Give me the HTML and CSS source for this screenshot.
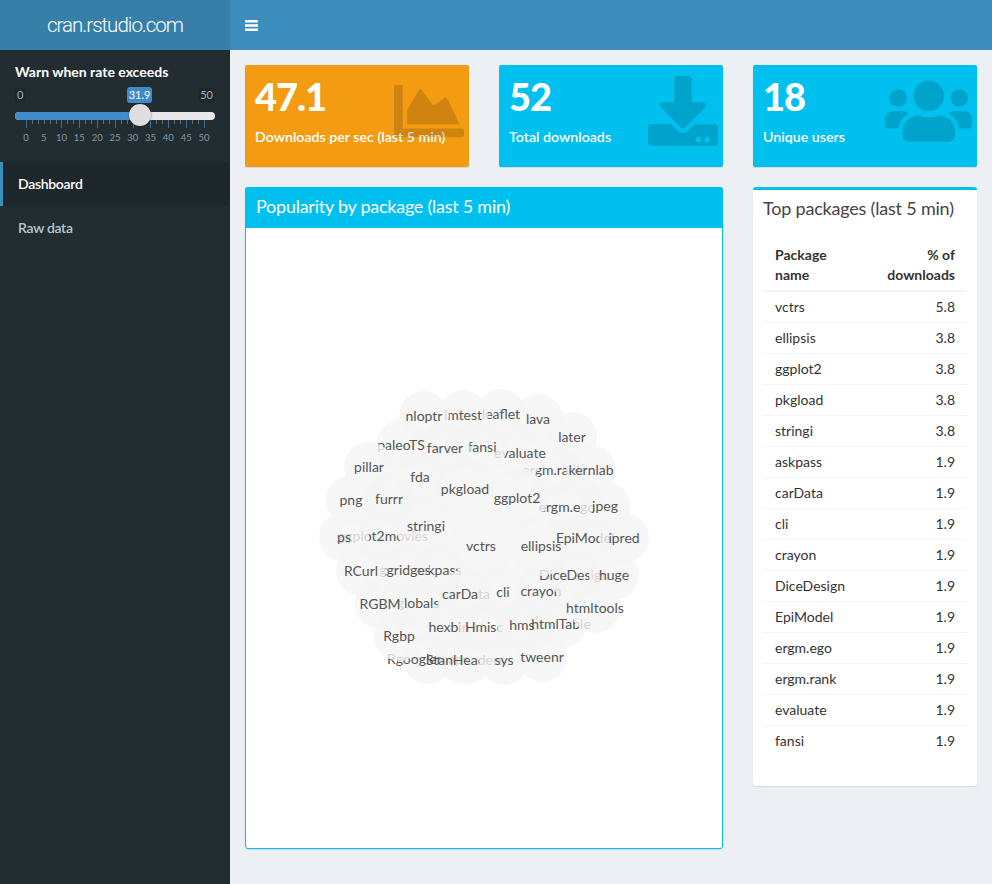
FILE: index.html
```html
<!DOCTYPE html>
<html lang="en">
<head>
  <meta charset="UTF-8">
  <title>cran.rstudio.com</title>
  <link rel="stylesheet" href="styles.css">
</head>
<body>
  <div class="wrapper">
    <div class="logo">cran.rstudio.com</div>
    <header class="navbar">
      <svg class="toggle" viewBox="0 0 13 11" preserveAspectRatio="none"><path d="M0 0h13v2.4H0zM0 4.3h13v2.4H0zM0 8.6h13V11H0z"/></svg>
    </header>

    <aside class="sidebar">
      <div class="slider-group">
        <label class="slider-label">Warn when rate exceeds</label>
        <div class="slider">
          <div class="slider-top">
            <span class="edge">0</span>
            <span class="edge">50</span>
          </div>
          <span class="current">31.9</span>
          <div class="track"><div class="track-fill"></div></div>
          <svg class="ticks" viewBox="15 120 200 8">
            <path class="tick-minor" d="M32.5 120v4M38.5 120v4M44.5 120v4M50.5 120v4M56.5 120v4M67.5 120v4M73.5 120v4M85.5 120v4M91.5 120v4M103.5 120v4M109.5 120v4M121.5 120v4M127.5 120v4M139.5 120v4M145.5 120v4M156.5 120v4M162.5 120v4M174.5 120v4M180.5 120v4M192.5 120v4M198.5 120v4"/>
            <path class="tick-major" d="M26.5 120v8M61.5 120v8M79.5 120v8M97.5 120v8M115.5 120v8M133.5 120v8M150.5 120v8M168.5 120v8M186.5 120v8M204.5 120v8"/>
          </svg>
          <span class="handle"></span>
          <div class="tick-labels">
            <span>0</span><span>5</span><span>10</span><span>15</span><span>20</span><span>25</span><span>30</span><span>35</span><span>40</span><span>45</span><span>50</span>
          </div>
        </div>
      </div>
      <ul class="menu">
        <li class="active">Dashboard</li>
        <li>Raw data</li>
      </ul>
    </aside>

    <main class="content">
      <div class="value-boxes">
        <div class="value-box orange">
          <h3>47.1</h3>
          <p>Downloads per sec (last 5 min)</p>
          <svg class="box-icon" viewBox="0 0 512 512"><path d="M500 384c6.6 0 12 5.4 12 12v40c0 6.6-5.4 12-12 12H12c-6.6 0-12-5.4-12-12V76c0-6.6 5.4-12 12-12h40c6.6 0 12 5.4 12 12v308h436zM372.7 159.5L288 216l-85.3-113.7c-5.1-6.8-15.5-6.3-19.9 1L96 248v104h384l-89.9-187.8c-3.2-6.5-11.4-8.7-17.4-4.7z"/></svg>
        </div>
        <div class="value-box blue">
          <h3>52</h3>
          <p>Total downloads</p>
          <svg class="box-icon" viewBox="0 0 512 512"><path d="M216 0h80c13.3 0 24 10.7 24 24v168h87.7c17.8 0 26.7 21.5 14.1 34.1L269.7 378.3c-7.5 7.5-19.8 7.5-27.3 0L90.1 226.1c-12.6-12.6-3.7-34.1 14.1-34.1H192V24c0-13.3 10.7-24 24-24zm296 376v112c0 13.3-10.7 24-24 24H24c-13.3 0-24-10.7-24-24V376c0-13.3 10.7-24 24-24h146.7l49 49c20.1 20.1 52.5 20.1 72.6 0l49-49H488c13.3 0 24 10.7 24 24zm-124 88c0-11-9-20-20-20s-20 9-20 20 9 20 20 20 20-9 20-20zm64 0c0-11-9-20-20-20s-20 9-20 20 9 20 20 20 20-9 20-20z"/></svg>
        </div>
        <div class="value-box blue">
          <h3>18</h3>
          <p>Unique users</p>
          <svg class="box-icon wide" viewBox="0 0 640 512"><path d="M96 224c35.3 0 64-28.7 64-64s-28.7-64-64-64-64 28.7-64 64 28.7 64 64 64zm448 0c35.3 0 64-28.7 64-64s-28.7-64-64-64-64 28.7-64 64 28.7 64 64 64zm32 32h-64c-17.6 0-33.5 7.1-45.1 18.6 40.3 22.1 68.9 62 75.1 109.4h66c17.7 0 32-14.3 32-32v-32c0-35.3-28.7-64-64-64zm-256 0c61.9 0 112-50.1 112-112S381.9 32 320 32 208 82.1 208 144s50.1 112 112 112zm76.8 32h-8.3c-20.8 10-43.9 16-68.5 16s-47.6-6-68.5-16h-8.3C179.6 288 128 339.6 128 403.2V432c0 26.5 21.5 48 48 48h288c26.5 0 48-21.5 48-48v-28.8c0-63.6-51.6-115.2-115.2-115.2zm-223.7-13.4C161.5 263.1 145.6 256 128 256H64c-35.3 0-64 28.7-64 64v32c0 17.7 14.3 32 32 32h65.9c6.3-47.4 34.9-87.3 75.2-109.4z"/></svg>
        </div>
      </div>

      <div class="boxes">
        <section class="box-solid">
          <h2 class="box-solid-title">Popularity by package (last 5 min)</h2>
          <!-- viewBox uses page coordinates, bubbles are drawn alphabetically so later ones cover earlier labels -->
          <svg class="bubbles" viewBox="246 228 476 620">
            <circle cx="484" cy="538" r="125"/>
            <circle cx="438" cy="570" r="25"/><text x="438" y="575">askpass</text>
            <circle cx="466" cy="594" r="25"/><text x="466" y="599">carData</text>
            <circle cx="503" cy="592" r="25"/><text x="503" y="597">cli</text>
            <circle cx="541" cy="591" r="25"/><text x="541" y="596">crayon</text>
            <circle cx="574" cy="575" r="25"/><text x="574" y="580">DiceDesign</text>
            <circle cx="541" cy="546" r="30"/><text x="541" y="551">ellipsis</text>
            <circle cx="585" cy="538" r="25"/><text x="585" y="543">EpiModel</text>
            <circle cx="567" cy="507" r="25"/><text x="567" y="512">ergm.ego</text>
            <circle cx="553" cy="470" r="25"/><text x="553" y="475">ergm.rank</text>
            <circle cx="520" cy="453" r="25"/><text x="520" y="458">evaluate</text>
            <circle cx="482" cy="447" r="25"/><text x="482" y="452">fansi</text>
            <circle cx="445" cy="448" r="25"/><text x="445" y="453">farver</text>
            <circle cx="420" cy="477" r="25"/><text x="420" y="482">fda</text>
            <circle cx="389" cy="499" r="25"/><text x="389" y="504">furrr</text>
            <circle cx="517" cy="498" r="30"/><text x="517" y="503">ggplot2</text>
            <circle cx="383" cy="536" r="25"/><text x="383" y="541">ggplot2movies</text>
            <circle cx="405" cy="570" r="25"/><text x="405" y="575">ggridges</text>
            <circle cx="418" cy="603" r="25"/><text x="418" y="608">globals</text>
            <circle cx="449" cy="627" r="25"/><text x="449" y="632">hexbin</text>
            <circle cx="484" cy="627" r="25"/><text x="484" y="632">Hmisc</text>
            <circle cx="522" cy="625" r="25"/><text x="522" y="630">hms</text>
            <circle cx="561" cy="624" r="25"/><text x="561" y="629">htmlTable</text>
            <circle cx="595" cy="608" r="25"/><text x="595" y="613">htmltools</text>
            <circle cx="614" cy="575" r="25"/><text x="614" y="580">huge</text>
            <circle cx="624" cy="538" r="25"/><text x="624" y="543">ipred</text>
            <circle cx="605" cy="506" r="25"/><text x="605" y="511">jpeg</text>
            <circle cx="591" cy="470" r="25"/><text x="591" y="475">kernlab</text>
            <circle cx="572" cy="437" r="25"/><text x="572" y="442">later</text>
            <circle cx="538" cy="419" r="25"/><text x="538" y="424">lava</text>
            <circle cx="501" cy="414" r="25"/><text x="501" y="419">leaflet</text>
            <circle cx="463" cy="415" r="25"/><text x="463" y="420">lmtest</text>
            <circle cx="424" cy="416" r="25"/><text x="424" y="421">nloptr</text>
            <circle cx="401" cy="445" r="25"/><text x="401" y="450">paleoTS</text>
            <circle cx="369" cy="467" r="25"/><text x="369" y="472">pillar</text>
            <circle cx="465" cy="489" r="30"/><text x="465" y="494">pkgload</text>
            <circle cx="351" cy="500" r="25"/><text x="351" y="505">png</text>
            <circle cx="344" cy="537" r="25"/><text x="344" y="542">ps</text>
            <circle cx="361" cy="571" r="25"/><text x="361" y="576">RCurl</text>
            <circle cx="380" cy="604" r="25"/><text x="380" y="609">RGBM</text>
            <circle cx="428" cy="659" r="25"/><text x="428" y="664">Rgooglemaps</text>
            <circle cx="399" cy="636" r="25"/><text x="399" y="641">Rgbp</text>
            <circle cx="465" cy="660" r="25"/><text x="465" y="665">StanHeaders</text>
            <circle cx="426" cy="526" r="30"/><text x="426" y="531">stringi</text>
            <circle cx="504" cy="660" r="25"/><text x="504" y="665">sys</text>
            <circle cx="542" cy="657" r="25"/><text x="542" y="662">tweenr</text>
            <circle cx="481" cy="546" r="33"/><text x="481" y="551">vctrs</text>
          </svg>
        </section>

        <section class="box-plain">
          <h2 class="box-plain-title">Top packages (last 5 min)</h2>
          <table class="packages">
            <thead>
              <tr><th>Package name</th><th class="num">% of downloads</th></tr>
            </thead>
            <tbody>
              <tr><td>vctrs</td><td class="num">5.8</td></tr>
              <tr><td>ellipsis</td><td class="num">3.8</td></tr>
              <tr><td>ggplot2</td><td class="num">3.8</td></tr>
              <tr><td>pkgload</td><td class="num">3.8</td></tr>
              <tr><td>stringi</td><td class="num">3.8</td></tr>
              <tr><td>askpass</td><td class="num">1.9</td></tr>
              <tr><td>carData</td><td class="num">1.9</td></tr>
              <tr><td>cli</td><td class="num">1.9</td></tr>
              <tr><td>crayon</td><td class="num">1.9</td></tr>
              <tr><td>DiceDesign</td><td class="num">1.9</td></tr>
              <tr><td>EpiModel</td><td class="num">1.9</td></tr>
              <tr><td>ergm.ego</td><td class="num">1.9</td></tr>
              <tr><td>ergm.rank</td><td class="num">1.9</td></tr>
              <tr><td>evaluate</td><td class="num">1.9</td></tr>
              <tr><td>fansi</td><td class="num">1.9</td></tr>
            </tbody>
          </table>
        </section>
      </div>
    </main>
  </div>
</body>
</html>
```

FILE: styles.css
```css
* {
  box-sizing: border-box;
}
body {
  margin: 0;
  font-family: "Lato", "Open Sans", sans-serif;
  font-size: 14px;
  line-height: 20px;
  color: #333;
  background: #ecf0f5;
}
.wrapper {
  display: grid;
  grid-template-columns: 230px 1fr;
  grid-template-rows: 50px 1fr;
  min-height: 884px;
}

/* header */
.logo {
  background: #367fa9;
  color: #fff;
  font-family: "Roboto", "Liberation Sans", sans-serif;
  font-weight: 300;
  font-size: 20.5px;
  letter-spacing: -1px;
  line-height: 50px;
  text-align: center;
}
.navbar {
  background: #3c8dbc;
  display: flex;
  align-items: center;
  padding-left: 15px;
}
.toggle {
  width: 13px;
  height: 11px;
  fill: #fff;
}

/* sidebar */
.sidebar {
  background: #222d32;
}
.slider-group {
  padding: 12px 15px 0;
  height: 112px;
}
.slider-label {
  display: block;
  color: #fff;
  font-weight: 700;
  margin-bottom: 5px;
}
.slider {
  position: relative;
  height: 60px;
}
.slider-top {
  display: flex;
  justify-content: space-between;
  padding-top: 1px;
}
.edge {
  background: rgba(0, 0, 0, .12);
  color: #a3b1b8;
  font-size: 11px;
  line-height: 14px;
  padding: 0 2px;
  border-radius: 3px;
}
.current {
  position: absolute;
  left: 112px;
  top: 0;
  width: 25px;
  height: 16px;
  background: #428bca;
  color: #fff;
  font-size: 11px;
  line-height: 16px;
  text-align: center;
  border-radius: 3px;
}
.track {
  position: absolute;
  left: 0;
  right: 0;
  top: 25px;
  height: 8px;
  background: #e8e8e8;
  border-radius: 4px;
  overflow: hidden;
}
.track-fill {
  width: 125px;
  height: 8px;
  background: #428bca;
}
.ticks {
  position: absolute;
  left: 0;
  top: 33px;
  width: 200px;
  height: 8px;
}
.tick-major {
  stroke: #3f6d96;
}
.tick-minor {
  stroke: #5e6c73;
}
.handle {
  position: absolute;
  left: 114px;
  top: 17px;
  width: 22px;
  height: 22px;
  border-radius: 50%;
  background: #dedede;
  box-shadow: 0 0 2px rgba(0, 0, 0, .5);
}
.tick-labels {
  position: absolute;
  left: 2.1px;
  top: 44px;
  display: grid;
  grid-template-columns: repeat(11, 17.8px);
  color: #8497a3;
  font-size: 9.5px;
  line-height: 14px;
  text-align: center;
}
.menu {
  list-style: none;
  margin: 0;
  padding: 0;
}
.menu li {
  height: 44px;
  padding: 12px 15px 12px 18px;
  color: #b8c7ce;
  font-weight: 600;
  letter-spacing: -.3px;
}
.menu li.active {
  background: #1e282c;
  border-left: 3px solid #3c8dbc;
  padding-left: 15px;
  color: #fff;
}

/* value boxes */
.content {
  padding: 15px;
}
.value-boxes {
  display: grid;
  grid-template-columns: repeat(3, 224px);
  gap: 30px;
  margin-bottom: 20px;
}
.value-box {
  position: relative;
  height: 102px;
  padding: 10px;
  border-radius: 2px;
  color: #fff;
  box-shadow: 0 1px 1px rgba(0, 0, 0, .1);
}
.orange {
  background: #f39c12;
}
.blue {
  background: #00c0ef;
}
.value-box h3 {
  margin: 0 0 10px;
  font-size: 38px;
  letter-spacing: -1px;
  line-height: 42px;
  font-weight: 900;
}
.value-box p {
  margin: 0;
  font-size: 14.2px;
  font-weight: 600;
}
.box-icon {
  position: absolute;
  top: 11px;
  right: 5px;
  width: 70px;
  height: 70px;
  fill: rgba(0, 0, 0, .15);
}
.box-icon.wide {
  width: 87.5px;
}

/* lower boxes */
.boxes {
  display: grid;
  grid-template-columns: 478px 224px;
  gap: 30px;
  align-items: start;
}
.box-solid {
  border: 1px solid #00c0ef;
  border-radius: 3px;
  background: #fff;
  box-shadow: 0 1px 1px rgba(0, 0, 0, .1);
}
.box-solid-title {
  margin: -1px -1px 0;
  height: 41px;
  padding: 9px 11px;
  background: #00c0ef;
  color: #fff;
  font-size: 18px;
  font-weight: 400;
  letter-spacing: -.25px;
  line-height: 20px;
  border-radius: 3px 3px 0 0;
}
.bubbles {
  display: block;
  width: 476px;
  height: 620px;
}
.bubbles circle {
  fill: #f5f5f5;
  fill-opacity: .8;
}
.bubbles text {
  fill: #555;
  font-size: 14px;
  text-anchor: middle;
}
.box-plain {
  height: 599px;
  background: #fff;
  border-top: 3px solid #00c0ef;
  border-radius: 3px;
  padding: 0 10px;
  box-shadow: 0 1px 1px rgba(0, 0, 0, .1);
}
.box-plain-title {
  margin: 0;
  padding: 8px 0 0;
  height: 45px;
  color: #444;
  font-size: 18px;
  font-weight: 400;
  letter-spacing: -.2px;
  line-height: 20px;
}
.packages {
  width: 100%;
  table-layout: fixed;
  border-collapse: collapse;
}
.packages th,
.packages td {
  padding: 5px 12px;
  text-align: left;
}
.packages th {
  padding-top: 10px;
  padding-bottom: 5px;
  border-bottom: 2px solid #f4f4f4;
}
.packages td {
  border-top: 1px solid #f4f4f4;
}
.packages tbody tr:first-child td {
  border-top: 0;
}
.packages .num {
  text-align: right;
}
```
